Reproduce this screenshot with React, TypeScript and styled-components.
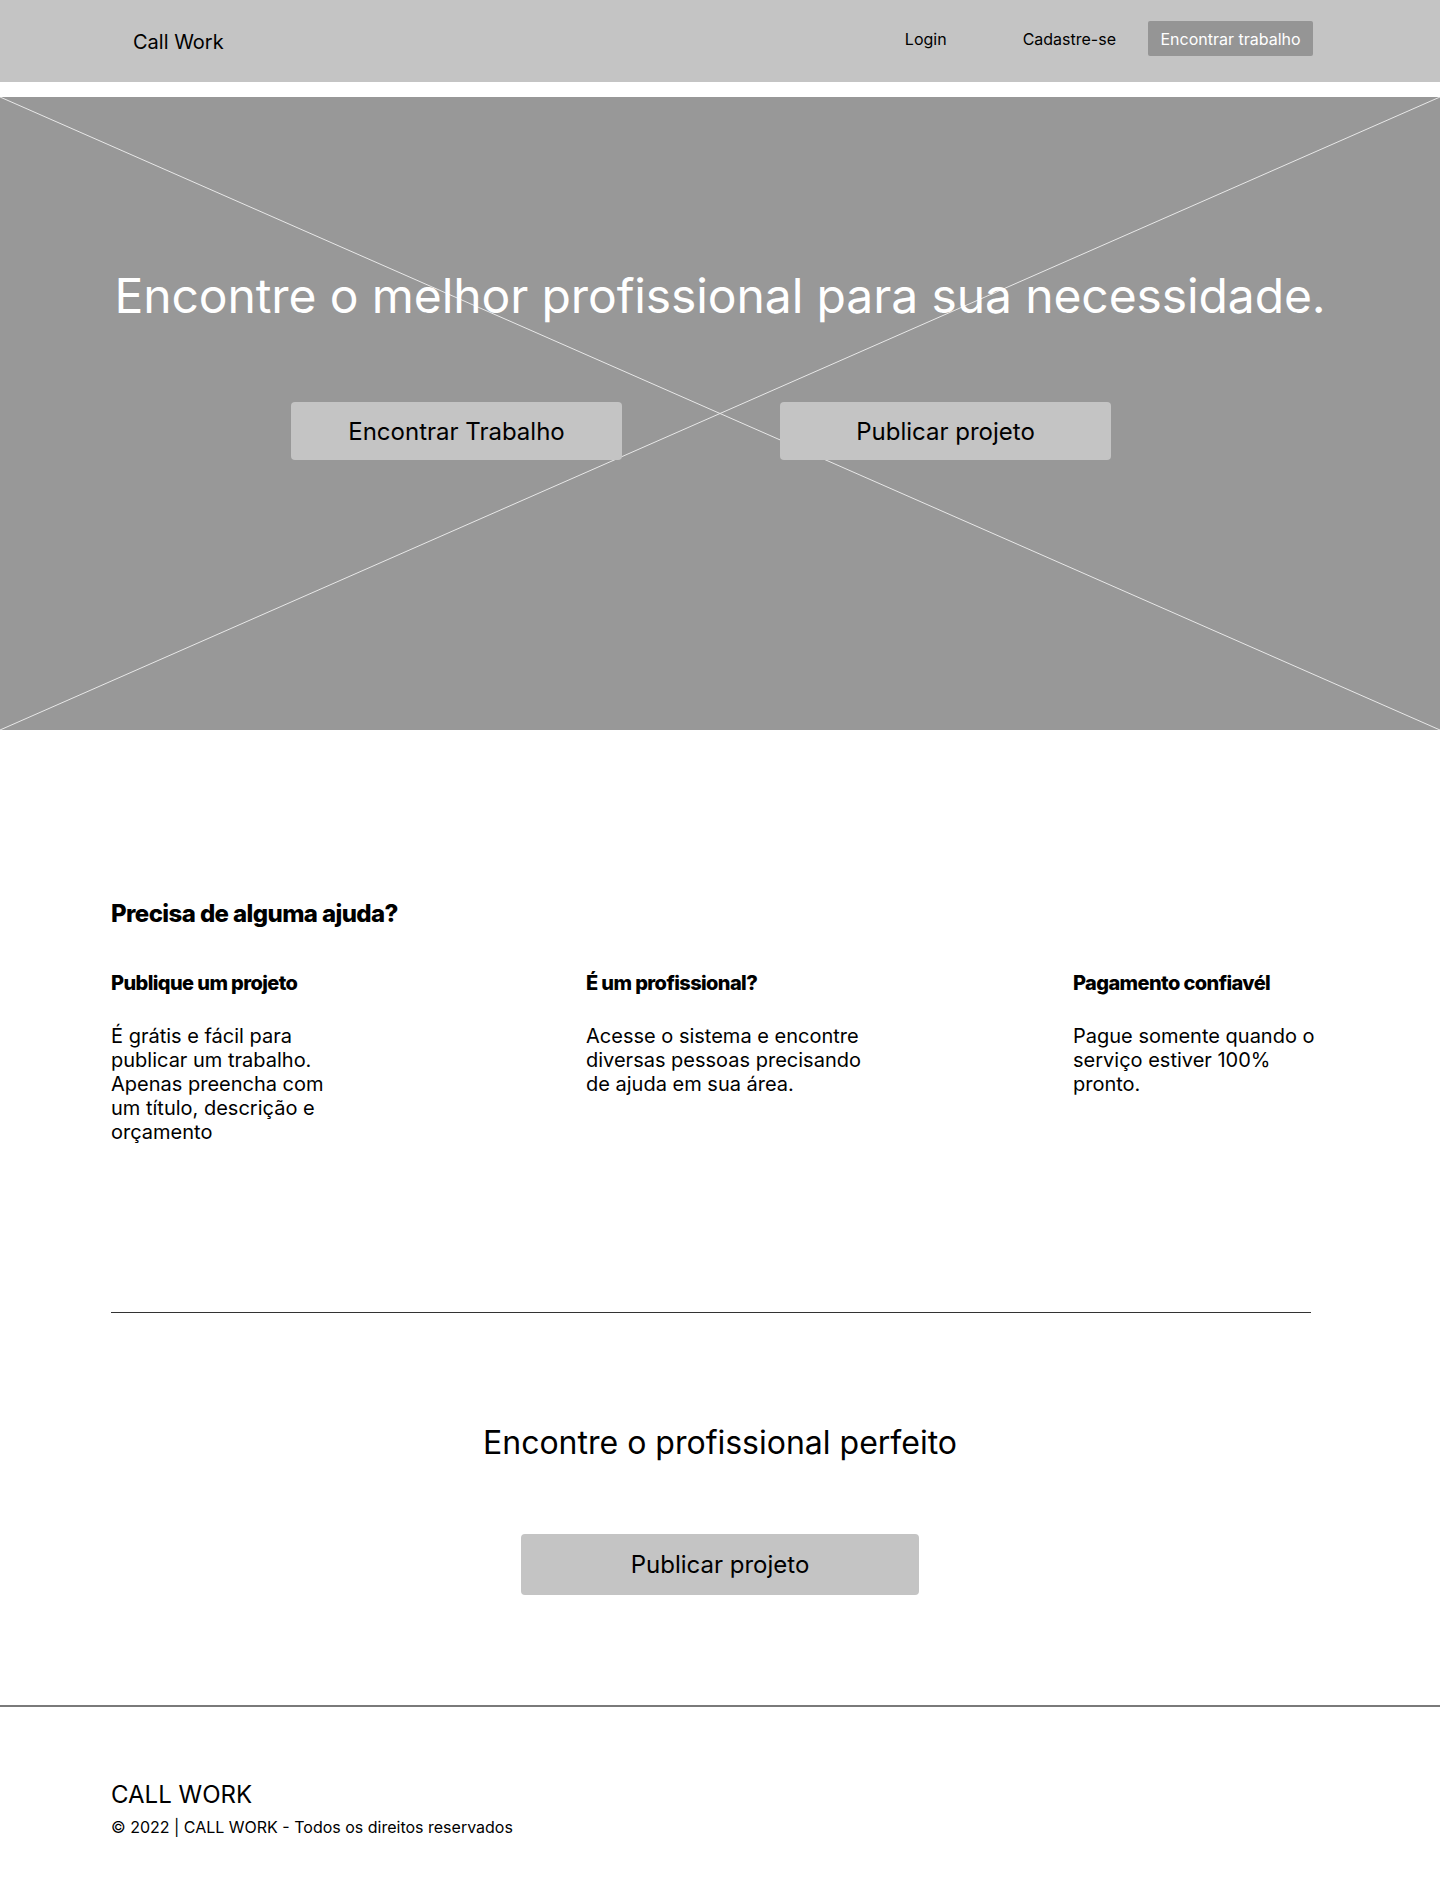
import * as React from "react";
import styled, { createGlobalStyle } from "styled-components";

const GlobalStyle = createGlobalStyle`
  html, body {
    margin: 0;
    padding: 0;
    background: #ffffff;
    font-family: Inter, "Noto Sans", sans-serif;
    color: #000000;
  }
  * {
    box-sizing: border-box;
  }
`;

const Header = styled.header`
  height: 82px;
  background: #c4c4c4;
  display: flex;
  align-items: center;
  justify-content: space-between;
  padding: 0 127px 0 133px;
`;

const Brand = styled.div`
  font-size: 20px;
  line-height: 24px;
  margin-top: 2px;
`;

const Nav = styled.nav`
  display: flex;
  align-items: center;
  margin-top: -5px;
`;

const NavLink = styled.a<{ $gap: number }>`
  font-size: 16px;
  line-height: 20px;
  color: #000000;
  text-decoration: none;
  margin-right: ${(p) => p.$gap}px;
`;

const NavButton = styled.a`
  display: flex;
  align-items: center;
  justify-content: center;
  width: 165px;
  height: 35px;
  background: #959595;
  color: #ffffff;
  font-size: 16px;
  border-radius: 2px;
  text-decoration: none;
`;

const Hero = styled.section`
  position: relative;
  margin-top: 15px;
  height: 633px;
  background: #989898;
  display: flex;
  flex-direction: column;
  align-items: center;
  padding-top: 170px;
  overflow: hidden;
`;

const Cross = styled.svg`
  position: absolute;
  inset: 0;
  width: 100%;
  height: 100%;
`;

const HeroTitle = styled.h1`
  position: relative;
  margin: 0;
  font-size: 48px;
  line-height: 58px;
  font-weight: 400;
  color: #ffffff;
  letter-spacing: -0.1px;
`;

const HeroActions = styled.div`
  position: relative;
  display: flex;
  gap: 158px;
  margin-top: 77px;
  margin-right: 38px;
`;

const GreyButton = styled.a<{ $w: number; $h: number }>`
  display: flex;
  align-items: center;
  justify-content: center;
  width: ${(p) => p.$w}px;
  height: ${(p) => p.$h}px;
  background: #c4c4c4;
  border-radius: 4px;
  font-size: 24px;
  color: #000000;
  text-decoration: none;
`;

const Help = styled.section`
  width: 1200px;
  margin-left: 111px;
  padding-top: 169px;
`;

const HelpTitle = styled.h2`
  margin: 0;
  font-size: 24px;
  line-height: 30px;
  font-weight: 800;
  letter-spacing: -0.6px;
`;

const Columns = styled.div`
  display: grid;
  grid-template-columns: 475px 487px max-content;
  margin-top: 42px;
`;

const Column = styled.div<{ $w: number }>`
  max-width: ${(p) => p.$w}px;
`;

const ColumnTitle = styled.h3`
  margin: 0;
  font-size: 20px;
  line-height: 24px;
  font-weight: 800;
  letter-spacing: -0.6px;
`;

const ColumnText = styled.p`
  margin: 29px 0 0;
  font-size: 20px;
  line-height: 24px;
  font-weight: 400;
`;

const Divider = styled.hr`
  border: none;
  border-top: 1px solid #333333;
  margin: 168px 0 0;
`;

const Cta = styled.section`
  display: flex;
  flex-direction: column;
  align-items: center;
  padding-top: 110px;
  padding-bottom: 110px;
`;

const CtaTitle = styled.h2`
  margin: 0 0 71px;
  font-size: 32px;
  line-height: 40px;
  font-weight: 400;
`;

const Footer = styled.footer`
  border-top: 2px solid #7a7a7a;
  padding: 73px 111px 70px;
`;

const FooterBrand = styled.div`
  font-size: 24px;
  line-height: 30px;
`;

const Copyright = styled.div`
  margin-top: 7px;
  font-size: 16px;
  line-height: 20px;
`;

const columns = [
  {
    title: "Publique um projeto",
    text: "É grátis e fácil para publicar um trabalho. Apenas preencha com um título, descrição e orçamento",
    width: 232,
  },
  {
    title: "É um profissional?",
    text: "Acesse o sistema e encontre diversas pessoas precisando de ajuda em sua área.",
    width: 285,
  },
  {
    title: "Pagamento confiavél",
    text: "Pague somente quando o serviço estiver 100% pronto.",
    width: 260,
  },
];

export default function App() {
  return (
    <>
      <GlobalStyle />
      <Header>
        <Brand>Call Work</Brand>
        <Nav>
          <NavLink href="#" $gap={76}>Login</NavLink>
          <NavLink href="#" $gap={32}>Cadastre-se</NavLink>
          <NavButton href="#">Encontrar trabalho</NavButton>
        </Nav>
      </Header>

      <Hero>
        <Cross viewBox="0 0 1440 633" preserveAspectRatio="none">
          <line x1="0" y1="0" x2="1440" y2="633" stroke="#e8e8e8" strokeWidth="1" />
          <line x1="1440" y1="0" x2="0" y2="633" stroke="#e8e8e8" strokeWidth="1" />
        </Cross>
        <HeroTitle>Encontre o melhor profissional para sua necessidade.</HeroTitle>
        <HeroActions>
          <GreyButton href="#" $w={331} $h={58}>Encontrar Trabalho</GreyButton>
          <GreyButton href="#" $w={331} $h={58}>Publicar projeto</GreyButton>
        </HeroActions>
      </Hero>

      <Help>
        <HelpTitle>Precisa de alguma ajuda?</HelpTitle>
        <Columns>
          {columns.map((c) => (
            <Column key={c.title} $w={c.width}>
              <ColumnTitle>{c.title}</ColumnTitle>
              <ColumnText>{c.text}</ColumnText>
            </Column>
          ))}
        </Columns>
        <Divider />
      </Help>

      <Cta>
        <CtaTitle>Encontre o profissional perfeito</CtaTitle>
        <GreyButton href="#" $w={398} $h={61}>Publicar projeto</GreyButton>
      </Cta>

      <Footer>
        <FooterBrand>CALL WORK</FooterBrand>
        <Copyright>© 2022 | CALL WORK - Todos os direitos reservados</Copyright>
      </Footer>
    </>
  );
}
